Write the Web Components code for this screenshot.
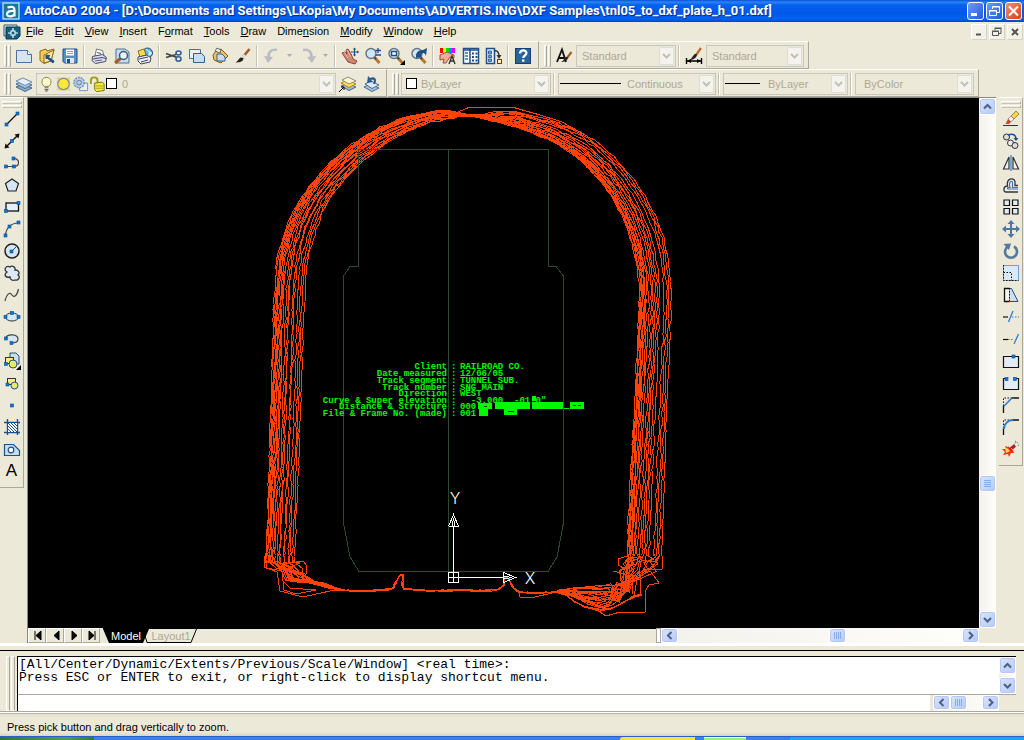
<!DOCTYPE html>
<html lang="en">
<head>
<meta charset="utf-8">
<title>AutoCAD 2004</title>
<style>
html, body { margin: 0; height: 100%; }
body { font: 11px/14px "Liberation Sans", Arial, sans-serif; background: #ece9d8; color: #000; overflow: hidden; }
</style>
</head>
<body>
<cad-app></cad-app>
<script>
const define = (name, css, html, setup) => {
  const template = document.createElement('template');
  template.innerHTML = `<style>*,::before,::after{box-sizing:border-box}button{font:inherit;border:0;margin:0;padding:0;background:none;color:inherit}${css}</style>`;
  customElements.define(name, class extends HTMLElement {
    connectedCallback() {
      if (this.shadowRoot) return;
      const root = this.attachShadow({ mode: 'open' });
      root.append(template.content.cloneNode(true));
      const body = document.createElement('template');
      body.innerHTML = typeof html === 'function' ? html(this) : html;
      root.append(body.content);
      if (setup) setup(this, root);
    }
  });
};

/* ---------- icons, all on an 18 x 18 grid ---------- */
const B = '#1f4f88', P = '#c9dcf0';
const node = (x, y) => `<rect x="${x - 1.5}" y="${y - 1.5}" width="3" height="3" fill="#0a78d8" stroke="#06509c" stroke-width=".6"/>`;
const lens = `<path d="M10.500 10.500l5 5.500" stroke="#b5772a" stroke-width="3"/><path d="M10 10l2 2" stroke="#444" stroke-width="2"/><circle cx="7" cy="6.500" r="5" fill="#cfe6f6" stroke="#66737e" stroke-width="1.400"/>`;
const icons = {
  new: `<path d="M1.500 3.500h11l4 4v8h-15z" fill="#d5e4f4" stroke="#4a7197"/><path d="M12.500 3.500v4h4" fill="#fff" stroke="#4a7197"/>`,
  open: `<path d="M2 4l6-2 1 2 7-2-3 12-7 2.500-4-3z" fill="#f2cb5a" stroke="#8c6a1a"/><path d="M6 8l10-5-3 11-7 2z" fill="#ffe9a0" stroke="#8c6a1a"/><path d="M15 16l-6-5 1-1 6 4zM8 12V8l4 .5z" fill="${B}" stroke="${B}"/>`,
  save: `<path d="M2 2h14v14H3.500L2 14.500z" fill="#5b8dc9" stroke="${B}"/><path d="M5 2.500h8v6H5z" fill="#fff"/><path d="M6 4.500h6M6 6.500h6" stroke="#7fa9d8"/><path d="M5 11h8v5H5z" fill="#dbe9f6"/><path d="M6 12h3v4H6z" fill="${B}"/>`,
  print: `<path d="M5 9L6.500 2l6 1.500L14 9z" fill="#fff" stroke="#777"/><path d="M2.500 9.500l10-2 4 3-1 4-10 2-3.500-3z" fill="#dedef0" stroke="#444a6a"/><path d="M3 12l9-1.500 4 1M7 5.500l4 1" stroke="#444a6a" fill="none"/><path d="M5 14l7-1" stroke="#667" fill="none"/>`,
  preview: `<path d="M3 2h9l4 3v11H3z" fill="#c9def2" stroke="#4a7197"/><path d="M8 11l-6 5" stroke="#a85c22" stroke-width="3"/><circle cx="10.500" cy="8.500" r="4" fill="#e7f4fd" stroke="#40576e" stroke-width="1.500"/>`,
  publish: `<circle cx="11.500" cy="6" r="5" fill="#58b5e5" stroke="${B}"/><path d="M10 2c2 2 5 3 2 7l4-3" fill="#fff" stroke="#e6f4f9"/><path d="M2 4l6-2 2 6-6 2z" fill="#ffd947" stroke="#87701b"/><path d="M2 10l9-2 4 3-1 4-9 2-3-3z" fill="#edf0f4" stroke="#3c4560"/><path d="M3 12l9-2M5 15l7-2" stroke="#3c4560"/>`,
  cut: `<path d="M1 6.500l11 4M1 10.500l10-3" stroke="#444" stroke-width="1.600"/><ellipse cx="13.500" cy="6" rx="2.500" ry="2" fill="none" stroke="#345a93" stroke-width="1.600"/><ellipse cx="13.500" cy="12" rx="2.500" ry="2.200" fill="none" stroke="#345a93" stroke-width="1.600"/>`,
  copy: `<path d="M1.500 2.500h11v9h-11z" fill="#e8f0fa" stroke="#4a7197"/><path d="M5.500 6.500h8l3 3v6h-11z" fill="${P}" stroke="#33618e"/>`,
  paste: `<path d="M5 4l5-2 7 7-7 7-7-3-1-5z" fill="#efc45a" stroke="#7c5b18"/><path d="M4 4l2-3 4 2-1 3z" fill="#eee" stroke="#666"/><path d="M6 7h5l3 3v4H6z" fill="${P}" stroke="#33618e"/>`,
  match: `<path d="M15.500 2L9 10" stroke="#a65c28" stroke-width="2.600"/><path d="M11 8l-2.500 3" stroke="#ddd" stroke-width="3"/><path d="M9.500 11c0 4-5 4.500-8 4.500 2-1 3-3.500 5-5z" fill="#222"/>`,
  undo: `<path d="M14 3C8 2 5 5 5.500 11" fill="none" stroke="#b9bcc4" stroke-width="2.600"/><path d="M1 9l9 1-5 6z" fill="#b9bcc4"/>`,
  redo: `<path d="M4 3c6-1 9 2 8.500 8" fill="none" stroke="#b9bcc4" stroke-width="2.600"/><path d="M17 9l-9 1 5 6z" fill="#b9bcc4"/>`,
  pan: `<path d="M1 6l3-1 2 2-1-4 2-1 3 5 2 5 4 2-2 3-7-2z" fill="#d08674" stroke="#8d4335"/><path d="M3 5l4 6M6 3l4 7" stroke="#f0b9a5"/><path d="M13.500 1v8M9.500 5h8" stroke="${B}" stroke-width="1.200"/><path d="M12 2.500l1.500-2 1.500 2M12 7.500l1.500 2 1.500-2M16 3.500L18 5l-2 1.500" fill="${B}"/>`,
  zoom: lens + `<path d="M14 1v5M11.500 3.500h5.500M11.500 8h5.500" stroke="${B}" stroke-width="1.300"/>`,
  zoomwin: lens + `<rect x="4.500" y="4.500" width="5" height="4" fill="#fff" stroke="${B}" stroke-width="1.500"/><path d="M18 13v5h-5z"/>`,
  zoomprev: lens + `<path d="M6 9c0-4 3-6 7-6l4-2-1 8c-1-4-5-4-5 0l1 1-6 1z" fill="${B}"/>`,
  props: `<path d="M1 1h3v5H1z" fill="#f00"/><path d="M4 1h3v5H4z" fill="#ff0"/><path d="M7 1h3v5H7z" fill="#0d0"/><path d="M10 1h3v5h-3z" fill="#08f"/><path d="M13 1h3v5h-3z" fill="#d0f"/><path d="M1 8l7-3 7 3v3l-4-1-4 6H4l1-4-4 1z" fill="#efad91" stroke="#925344"/><path d="M10 17l3-8 3 8M11 14h4" fill="none" stroke="#333" stroke-width="1.400"/>`,
  dc: `<path d="M1.500 1.500h15v15h-15z" fill="#fff" stroke="${B}" stroke-width="1.500"/><path d="M1 3h16M8 2v15" stroke="${B}" stroke-width="1.500"/><path d="M3 6h3M3 9h3M3 12h3" stroke="#3a70ad" stroke-width="1.500"/><path d="M10 5.500h2v2h-2zM13.500 5.500h2v2h-2zM10 9h2v2h-2zM13.500 9h2v2h-2zM10 12.500h2v2h-2zM13.500 12.500h2v2h-2z" fill="${B}"/>`,
  tp: `<path d="M1.500 1.500h8v15h-8z" fill="#e9f2fb" stroke="${B}" stroke-width="1.500"/><path d="M3.500 4h3v3h-3zM3.500 8.500h3v2h-3zM3.500 12h3v2.500h-3z" fill="#7da3cf" stroke="${B}" stroke-width=".8"/><path d="M9 4c4-1 5 2 5 6" fill="none" stroke="#333" stroke-width="1.500"/><path d="M11.500 8h5L14 12z" fill="#333"/><rect x="12.500" y="12.500" width="4" height="4" fill="#fff4b0" stroke="${B}"/>`,
  help: `<rect x="1.500" y="1.500" width="15" height="15" fill="#28639b" stroke="#173e70"/><path d="M6 6.500c0-4 6.500-4 6.500-.5 0 2.500-3.300 2.500-3.300 5" fill="none" stroke="#fff" stroke-width="2.200"/><rect x="8" y="12.500" width="2.400" height="2.200" fill="#fff"/>`,
  style: `<path d="M2 15L7 2.500l4 12.500M3.500 11h6" fill="none" stroke="#111" stroke-width="1.800"/><path d="M16.500 5L12 11" stroke="#a65c28" stroke-width="2.200"/><path d="M13 10c0 4-4 5-7 5 3-1 3-4 5-5z" fill="#222"/>`,
  dim: `<path d="M1.500 11v6M16.500 11v6M2 14h14" stroke="#000" stroke-width="1.400"/><path d="M2 14l4-2v4zM16 14l-4-2v4z"/><path d="M16 1l-5 7" stroke="#b76930" stroke-width="2.200"/><path d="M12 7c0 4-4 6-8 6 3-1 4-5 6-6z" fill="#222"/>`,
  layers: `<path d="M1 12l7-3 9 4-7 3.500z" fill="#8ba9ca" stroke="#466a90"/><path d="M1 9l7-3 9 4-7 3.500z" fill="#a9c3df" stroke="#466a90"/><path d="M1 6l7-3 9 4-7 3.500z" fill="#e5eef8" stroke="#6a8cad"/>`,
  layermake: `<path d="M2 11l7-3 8 4-7 3.500z" fill="#9db9d8" stroke="#466a90"/><path d="M2 8l7-3 8 4-7 3.500z" fill="#ffe04c" stroke="#a78a10"/><path d="M3 5l6-3 8 4-7 3z" fill="#fff7c9" stroke="#888"/><path d="M0 17l5-5M5 12v3M5 12H2" stroke="#000" fill="none"/>`,
  layerprev: `<path d="M2 12l6-3 9 4-7 3.500z" fill="#a9c3df" stroke="#466a90"/><path d="M3 9l6-3 8 4-7 3.500z" fill="#dce9f7" stroke="#466a90"/><path d="M13 9c3-5-1-8-5-6L6 1 5 8l6-1-2-2c3-1 4 1 2 4z" fill="#2f5b8f"/>`,
  line: `<path d="M3.500 14.500l11-11" stroke="#111" stroke-width="1.200"/>${node(14.500, 3.500)}${node(3.500, 14.500)}`,
  xline: `<path d="M3 15L15 3" stroke="#111" stroke-width="1.400"/><path d="M1.500 16.500l1-5 4 4zM16.500 1.500l-5 1 4 4z" fill="#111"/>${node(9, 9)}`,
  pline: `<path d="M3 12.500h8c6 0 6-8 0-8" fill="none" stroke="#444" stroke-width="1.200"/>${node(3, 12.500)}${node(11, 12.500)}${node(10.500, 4.500)}`,
  polygon: `<path d="M9 3l6.500 4.500-2.500 7.500H5L2.500 7.500z" fill="#d7e6f4" stroke="#222" stroke-width="1.200"/>`,
  rect: `<rect x="3" y="5" width="12.500" height="8" fill="#e6eff8" stroke="#111" stroke-width="1.300"/>${node(3, 13)}${node(15.500, 5)}`,
  arc: `<path d="M2.500 15.500C3 8 8 3 15.500 3" fill="none" stroke="#444" stroke-width="1.200"/>${node(2.500, 15.500)}${node(6.500, 6.500)}${node(15.500, 2.500)}`,
  circle: `<circle cx="9" cy="9" r="7" fill="#d7e6f4" stroke="#222" stroke-width="1.500"/><path d="M9 9l4-4" stroke="${B}"/>${node(8.500, 9.500)}`,
  cloud: `<path d="M4 8C0 6 3 1 7 3c2-2 6 0 5 3 4 0 5 3 3 5 3 2 0 6-3 5-2 1-5 0-5-3-4 1-7-2-3-5z" fill="#dde9f5" stroke="#333" stroke-width="1.300"/>`,
  spline: `<path d="M2 15c2-8 5-9 7-6s5 1 6.500-6" fill="none" stroke="#444" stroke-width="1.200"/>`,
  ellipse: `<ellipse cx="9" cy="9" rx="6.500" ry="4" fill="#d7e6f4" stroke="#333"/>${node(2.500, 9)}${node(15.500, 9)}${node(9, 5)}`,
  earc: `<path d="M2.500 8.500C4 3 15 4 15 9c0 3-3 4-6.500 4" fill="#d7e6f4" stroke="#444" stroke-width="1.200"/>${node(3, 8.500)}${node(8.500, 13)}`,
  insert: `<path d="M7 1h6l3 3v8H7z" fill="${P}" stroke="${B}"/><rect x="2.500" y="5.500" width="8" height="6" fill="#f8ef76" stroke="#333"/><circle cx="10" cy="12" r="4" fill="#efe969" stroke="${B}"/>${node(3, 12)}<path d="M18 13v5h-5z"/>`,
  block: `<rect x="4.500" y="4.500" width="8" height="6" fill="#f8ef76" stroke="#333"/><circle cx="11.500" cy="11.500" r="3.500" fill="#efe969" stroke="${B}"/>${node(4.500, 10.500)}`,
  point: node(9, 9.500),
  hatch: `<path d="M1 4.500h16M1 14.500h16M4.500 1v16M14.500 1v16" stroke="${B}" stroke-width="1.400"/><path d="M5 5h9v9H5z" fill="#fff"/><path d="M5 5l9 9M8 5l6 6M11 5l3 3M5 8l6 6M5 11l3 3" stroke="${B}"/>`,
  region: `<path d="M1.500 4.500h9l6 6v5h-15z" fill="${P}" stroke="${B}" stroke-width="1.200"/><circle cx="8" cy="10" r="2.800" fill="#fff" stroke="${B}" stroke-width="1.200"/>`,
  erase: `<path d="M1 15.500h15" stroke="#333"/><path d="M14 1l3 3-5 5-3-3z" fill="#f2d54c" stroke="#7d6a17" stroke-width=".7"/><path d="M9 6l3 3-3 3-3-3z" fill="#eee" stroke="#777" stroke-width=".7"/><path d="M6 9l3 3-2 2H3.500z" fill="#d3452e"/>`,
  dup: `<circle cx="4.500" cy="5" r="3" fill="#ddd" stroke="#333"/><circle cx="8.500" cy="11" r="3" fill="#eee" stroke="#333"/><circle cx="13" cy="13.500" r="3" fill="#ddd" stroke="#333"/><path d="M6 3c5-2 8 0 8 4" fill="none" stroke="${B}" stroke-width="1.600"/><path d="M11.500 6h5L14 9z" fill="${B}"/>`,
  mirror: `<path d="M7 3v12H1.500zM11 3v12h5.500z" fill="#eef3f8" stroke="#333" stroke-width="1.200"/><path d="M9 1v16" stroke="#2a7fd4" stroke-width="1.200"/>`,
  offset: `<path d="M16 16H4c-3 0-3-6 1.500-6C4 1 14 1 13 7M13 7v2.500h3" fill="#eee" stroke="#333" stroke-width="1.300"/><path d="M16 13H6.500c-1.500 0-1.500-1.500 0-1.500H8C6 4.500 11 4 10.500 7v4.500H16" fill="none" stroke="#3274b8" stroke-width="1.200"/>`,
  array: `<path d="M2 2h5.500v5.500H2zM10.500 2H16v5.500h-5.500zM2 10.500h5.500V16H2zM10.500 10.500H16V16h-5.500z" fill="#e3ebf5" stroke="#111" stroke-width="1.200"/>`,
  move: `<path d="M9 3v12M3 9h12" stroke="#4b76a5" stroke-width="2"/><path d="M9 0l3.500 4h-7zM9 18l3.500-4h-7zM0 9l4-3.500v7zM18 9l-4-3.500v7z" fill="#4b76a5"/>`,
  rotate: `<path d="M6 4.500A6 6 0 1 0 12 4.500" fill="none" stroke="#55789d" stroke-width="2.600"/><path d="M1.500 2L9 1.500 7 8z" fill="#55789d"/>`,
  scale: `<rect x="1.500" y="1.500" width="15" height="15" fill="#dce8f4" stroke="#7ba0c6"/><path d="M1.500 1v15.500h15M1.500 8.500h8v8" fill="none" stroke="#111" stroke-dasharray="1.500 1.500"/>`,
  stretch: `<path d="M7.500 2.500h2l6.500 13H7.500z" fill="#cbdff3" stroke="${B}"/><path d="M7.500 2.500h-5v13h5" fill="#f4f3ec" stroke="#111" stroke-width="1.300"/><path d="M7.500 2v13" stroke="#111" stroke-dasharray="1.500 1.500"/>`,
  trim: `<path d="M1 9h5" stroke="#111" stroke-width="1.200"/><path d="M6.500 14L11 3" stroke="#2a7fd4" stroke-width="1.300"/><path d="M10 9h7" stroke="#2a7fd4" stroke-dasharray="1.500 1.500"/>`,
  extend: `<path d="M1 9.500h5" stroke="#111" stroke-width="1.200"/><path d="M6 9.500h6" stroke="#2a7fd4" stroke-dasharray="1.500 1.500"/><path d="M12 14l4.500-10" stroke="#2a7fd4" stroke-width="1.300"/>`,
  breakpt: `<path d="M1.500 4.500h15v11h-15z" fill="#e3ebf5" stroke="#111" stroke-width="1.200"/>${node(11.500, 4.500)}`,
  breakln: `<path d="M4 4.500H1.500v11h15v-11H14" fill="#e3ebf5" stroke="#111" stroke-width="1.200"/>${node(4.500, 5)}${node(13, 5)}`,
  chamfer: `<path d="M1.500 10V2h8" fill="none" stroke="#111" stroke-dasharray="1.500 1.500"/><path d="M1.500 9.500V17M9.500 2H17" stroke="#111" stroke-width="1.300"/><path d="M2 10l8-8" stroke="#2a7fd4" stroke-width="1.600"/>`,
  fillet: `<path d="M1.500 10V2h8" fill="none" stroke="#111" stroke-dasharray="1.500 1.500"/><path d="M1.500 10V17M10.500 2H17" stroke="#111" stroke-width="1.300"/><path d="M2 11c0-5 4-9 9-9" fill="none" stroke="#2a7fd4" stroke-width="2"/>`,
  explode: `<path d="M6 6l2 2 4-1-1 3 1 3-3 0-2 4-1-3-5 1 2-3-3-3 4 0-1-3 3 1z" fill="#e33a1e"/><path d="M3 7l3 2 2 2-4 2z" fill="#ffdb42"/><path d="M8 9.500l5-4" stroke="#a22" stroke-width="3.400"/><path d="M9 8l2 2" stroke="#eb6"/><path d="M12 5l2-3M13 1l3 2M16 6l1-2" stroke="#779" stroke-dasharray="1.500 1"/>`,
  bulb: `<path d="M6.500 11.500C2.500 8 4 2 9 2s6.500 6 2.500 9.500z" fill="#fffccf" stroke="#8a8238"/><path d="M7 13h4M7 15h4M8 16.500h2" stroke="#666" stroke-width="1.200"/>`,
  sun: `<rect x="2" y="2" width="14" height="14" fill="#d9d26a" opacity=".7"/><circle cx="9" cy="9" r="6" fill="#ffe92e" stroke="#7c8a9c" stroke-width="1.200"/>`,
  freeze: `<path d="M8 8h8.500v8H8z" fill="#e8eef6" stroke="#7894b4"/><circle cx="7.500" cy="7.500" r="5.500" fill="#b9cee3" stroke="#7290b3" stroke-width="1.500" stroke-dasharray="2 1"/><circle cx="7.500" cy="7.500" r="2.500" fill="none" stroke="#567dab"/>`,
  lock: `<path d="M2 9V5c0-4 7-4 7 0v3" fill="none" stroke="#9b9b24" stroke-width="2"/><path d="M6 8l8-1 2 2v7l-8 1-2-2z" fill="#f2ea3d" stroke="#77740e"/><path d="M7 11h8M7 13.500h8" stroke="#a9a51f"/>`,
  drawing: `<path d="M1 2h13v11H1z" fill="#dce9f0" stroke="#36556c"/><path d="M3 4h14v9l-3 3H3z" fill="#10617f" stroke="#0b3a55"/><path d="M10 5v10M5 10h10" stroke="#fff" stroke-width="1.200"/><rect x="8" y="8" width="4" height="4" fill="#10617f" stroke="#fff"/>`,
  app: `<rect x="1" y="1" width="16" height="16" fill="#14799c" stroke="#d5eef2" stroke-width="1.200"/><path d="M5.500 5.500c5-1.500 7-.5 7 2.500v6.500M12.500 9C8 8.500 5 9.500 5 12c0 3.500 6 3 7.500 0" fill="none" stroke="#fff" stroke-width="2.200"/>`
};
define('cad-icon', `:host{display:block;width:18px;height:18px;flex:none}svg{display:block;width:100%;height:100%}`,
  el => `<svg viewBox="0 0 18 18" fill="none" aria-hidden="true"><g fill="#000">${icons[el.getAttribute('name')]}</g></svg>`);

/* ---------- title bar ---------- */
define('title-bar', `
:host{display:flex;align-items:center;height:22px;flex:none;padding:0 2px;gap:4px;color:#fff;
 background:linear-gradient(#0a50d0,#2a84fa 2px,#0560ee 5px,#0058e8 14px,#0461f4 19px,#0a44c0)}
h1{flex:1;min-width:0;margin:0;font:bold 13px/18px Roboto,"Liberation Sans",sans-serif;white-space:nowrap;text-shadow:1px 1px #0a2a80}
div{display:flex;gap:2px}
button{width:17px;height:18px;border:1px solid #fff;border-radius:3px;background:linear-gradient(135deg,#6d9cf8,#2258dd)}
button:last-child{background:linear-gradient(135deg,#f0906e,#d8401a)}
svg{display:block}`,
`<cad-icon name="app"></cad-icon><h1><slot></slot></h1>
<div><button aria-label="Minimize"><svg width="15" height="16"><path d="M3 11.500h6" stroke="#fff" stroke-width="3"/></svg></button>
<button aria-label="Restore"><svg width="15" height="16" fill="none" stroke="#fff"><path d="M5.500 6V3.500h7v6H10M5 4h8M2.500 7.500h7v5h-7zM2 8h8"/></svg></button>
<button aria-label="Close"><svg width="15" height="16"><path d="M3 3.500l9 9M12 3.500l-9 9" stroke="#fff" stroke-width="2"/></svg></button></div>`);

/* ---------- menu bar ---------- */
define('menu-bar', `
:host{display:flex;align-items:center;height:19px;flex:none;padding:0 1px 0 3px;background:#ece9d8}
nav{display:flex;flex:1;margin-left:1px}
nav button{padding:0 6px 0 5px;font-size:11px;line-height:17px;white-space:nowrap}
nav button:first-child{padding-left:4px}
.w{display:flex;gap:2px}.w button{width:16px;height:16px;background:#f4f2e8;border:1px solid #fff;border-right-color:#d6d2c2;border-bottom-color:#d6d2c2}
svg{display:block}`,
`<cad-icon name="drawing"></cad-icon><nav>${['|File', '|Edit', '|View', '|Insert', 'F|ormat', '|Tools', '|Draw', 'Dime|nsion', '|Modify', '|Window', '|Help'].map(s => `<button>${s.replace(/\|(.)/, '<u>$1</u>')}</button>`).join('')}</nav>
<div class="w"><button aria-label="Minimize drawing"><svg width="14" height="14"><path d="M4 9.500h5" stroke="#555" stroke-width="2"/></svg></button>
<button aria-label="Restore drawing"><svg width="14" height="14" fill="none" stroke="#555"><path d="M5 5V3.500h6v5H9M4.500 3h7M2.500 6.500h6v4h-6zM2 6h7"/></svg></button>
<button aria-label="Close drawing"><svg width="14" height="14"><path d="M4 4l6 6M10 4l-6 6" stroke="#555" stroke-width="2"/></svg></button></div>`);

/* ---------- toolbars ---------- */
define('tool-bar', `
:host{display:flex;align-items:center;flex:none;box-sizing:border-box;padding:1px 4px 0;border:1px solid #fff;border-right-color:#aca899;border-bottom-color:#aca899;border-left:0}
:host([vertical]){flex-direction:column;padding:3px 0 5px;width:24px}
i{display:flex;flex:none;gap:1px;margin-right:1px}
i::before,i::after{content:"";width:3px;height:22px;border:1px solid #fff;border-right-color:#aca899;border-bottom-color:#c8c4b4}
:host([vertical]) i{flex-direction:column;margin:0}
:host([vertical]) i::before,:host([vertical]) i::after{width:20px;height:3px}`,
`<i></i><slot></slot>`);
define('tool-button', `
:host{display:block;flex:none}
button{display:grid;place-items:center;width:23px;height:22px}
:host([drop]) button{width:13px}
b{font:17px/20px "Liberation Sans",Arial,sans-serif}
svg{display:block}`,
el => `<button aria-label="${el.getAttribute('label')}">${el.hasAttribute('drop') ? '<svg width="5" height="3"><path d="M0 0h5L2.500 3z" fill="#aab"/></svg>' : el.hasAttribute('text') ? `<b>${el.getAttribute('text')}</b>` : `<cad-icon name="${el.getAttribute('name')}"></cad-icon>`}</button>`);
define('tool-sep', `:host{display:block;flex:none;width:2px;height:22px;margin:0 2px;box-sizing:border-box;border-left:1px solid #c5c2b2;border-right:1px solid #fff}`, '');

define('combo-box', `
:host{position:relative;display:block;flex:none;height:22px;margin-left:1px}
select{appearance:none;display:block;width:100%;height:22px;margin:0;padding:0 18px 0 var(--indent,5px);border:1px solid #c9c7ba;border-radius:0;background:#ece9d8;color:#aca899;font:11px/20px "Liberation Sans",Arial,sans-serif;opacity:1}
span{position:absolute;inset:1px auto 1px 2px;display:flex;align-items:center;pointer-events:none}
svg{position:absolute;right:2px;top:2px;background:#f4f3ed;border:1px solid #e0ded2;pointer-events:none}
::slotted(cad-icon){width:17px}`,
el => `<select disabled aria-label="${el.getAttribute('label')}"><option>${el.getAttribute('value')}</option></select><span><slot></slot></span><svg width="15" height="18"><path d="M3 6l3.500 3.500L10 6" stroke="#c2c0b4" stroke-width="2" fill="none"/></svg>`);
define('color-chip', `:host{display:block;box-sizing:border-box;width:11px;height:11px;border:1px solid #000;background:#fff}`, '');
define('line-sample', `:host{display:block;height:1px;background:#000}`, '');

/* ---------- scroll bars ---------- */
define('scroll-bar', `
:host{display:flex;flex-direction:column;background:linear-gradient(90deg,#f3f1ec,#fefefb)}
:host([horizontal]){flex-direction:row}
button,.t{flex:none;width:17px;height:17px;border:1px solid #fff;border-radius:3px;background:linear-gradient(135deg,#dae5ff,#b4c9f8);box-shadow:inset 0 0 0 1px #b5c8f4;display:grid;place-items:center}
:host([horizontal]) button,:host([horizontal]) .t{height:15px}
svg{display:block}
.a{flex:var(--before,1)}.b{flex:var(--after,1)}
:host([bare]) .t{display:none}
:host([horizontal]) svg{transform:rotate(-90deg)}`,
`<button aria-label="Scroll back"><svg width="9" height="9"><path d="M1 6.500L4.500 3 8 6.500" fill="none" stroke="#4d6185" stroke-width="2"/></svg></button>
<div class="a"></div><div class="t"><svg width="9" height="9"><path d="M1 1.500h7M1 3.500h7M1 5.500h7M1 7.500h7" stroke="#8ba9ee"/></svg></div><div class="b"></div>
<button aria-label="Scroll forward"><svg width="9" height="9"><path d="M1 3l3.500 3.500L8 3" fill="none" stroke="#4d6185" stroke-width="2"/></svg></button>`);

/* ---------- tunnel drawing ---------- */
const drawing = () => {
  let seed = 71;
  const rnd = () => (seed = (seed * 16807) % 2147483647) / 2147483647;
  const mix = (a, b, t) => a + (b - a) * t;
  /* each wall is a pair of limits; the survey profiles lie between them */
  const leftA = [[266, 556], [268, 500], [271, 400], [274, 300], [277, 262], [284, 233], [296, 207], [312, 183], [332, 161], [357, 141], [386, 125], [417, 115], [446, 111]];
  const leftB = [[294, 556], [297, 500], [301, 400], [304, 310], [307, 268], [313, 240], [322, 214], [334, 193], [350, 174], [372, 154], [398, 136], [423, 125], [448, 119]];
  const rightA = [[502, 123], [527, 131], [552, 142], [577, 158], [600, 181], [616, 205], [628, 231], [636, 262], [639, 295], [635, 400], [630, 480], [627, 556]];
  const rightB = [[506, 112], [537, 117], [569, 127], [599, 144], [627, 171], [648, 201], [662, 233], [669, 267], [671, 305], [667, 400], [664, 490], [661, 556]];
  const spline = (pts) => {
    const out = [];
    for (let i = 0; i < pts.length - 1; i++) {
      const p0 = pts[Math.max(0, i - 1)], p1 = pts[i], p2 = pts[i + 1], p3 = pts[Math.min(pts.length - 1, i + 2)];
      const n = Math.max(3, Math.round(Math.hypot(p2[0] - p1[0], p2[1] - p1[1]) / 6));
      for (let k = 0; k < n; k++) {
        const t = k / n;
        out.push([0, 1].map(d => .5 * (2 * p1[d] + (p2[d] - p0[d]) * t + (2 * p0[d] - 5 * p1[d] + 4 * p2[d] - p3[d]) * t * t + (3 * p1[d] - p0[d] - 3 * p2[d] + p3[d]) * t * t * t)));
      }
    }
    out.push(pts[pts.length - 1]);
    return out;
  };
  const rough = (pts, r) => 'M' + pts.map(p => `${(p[0] + (rnd() - .5) * r).toFixed(1)} ${(p[1] + (rnd() - .5) * r).toFixed(1)}`).join('L');
  const between = (A, B, t) => A.map((p, i) => [mix(p[0], B[i][0], t), mix(p[1], B[i][1], t)]);
  const lt = [0, .04, .08, .11, .14, .18, .22, .26, .31, .4, .47, .5, .62, .67, .78, .86, .93, 1];
  const rt = [0, .03, .06, .09, .12, .15, .19, .24, .3, .38, .44, .5, .56, .64, .78, .86, .93, 1];
  let d = '';
  lt.forEach((t, i) => {
    const tr = rt[i];
    d += rough(spline(between(leftA, leftB, t).concat(between(rightA, rightB, tr))), 1.8);
    const x = mix(266, 294, t), j = rnd();
    d += rough([[x, 556], [x - 1 + j * 2, 562], [x + 8, 562 + j * 7], [mix(280, 306, j), 570 + j * 5], [mix(284, 310, j), 576 + 6 * rnd()], [mix(303, 322, j), 579 + j * 7], [325, 584 + j * 3], [341, 590]], 2);
    const y = 586 + i * 1.3;
    d += rough([[558, 592], [572, mix(589, 595, i / 17)], [586, mix(586, 604, i / 17)], [600, y], [610, y + 1 - 4 * rnd()], [618, mix(583, 603, rnd())], [622 + 8 * rnd(), 592 - 10 * j], [mix(620, 634, tr) + 4 * j, 577 + 6 * rnd()], [mix(620, 650, tr) + 5 * j, 570], [mix(632, 662, tr) - 12 * j, 563], [mix(622, 657, tr) + 8 * rnd(), 559], [mix(627, 661, tr), 556]], 4);
  });
  for (let i = 0; i < 4; i++) {
    d += rough(spline([[338, 590], [366, 591], [390, 589], [394, 586], [399, 577], [403, 575], [403, 588], [410, 589], [430, 591], [462, 590], [480, 591], [501, 588], [505, 578], [509, 579], [517, 591], [540, 593], [563, 592], [585, 600]]), 2);
  }
  for (let i = 0; i < 4; i++) d += rough([[563, 593], [574, 601], [586, 607], [600, 610], [612, 609], [624, 602], [633, 597], [641, 595]], 2.500);
  /* stray profiles */
  d += 'M458 112L470 107L512 107L540 115L562 122L585 135M265 556L264 567L277 572L280 591L303 597L330 591L340 590M266 560L267 568L282 571L284 590L296 594L316 590L290 588L284 582M296 561L304 562L307 566L306 574M586 606L600 612L606 616L620 612L645 612L646 590L649 585L659 583L651 572L643 570L662 569L662 556M519 592L520 597L535 597L552 593M627 556L618 559L618 565L625 569M613 571L624 574M640 597L641 575M634 598L637 578M628 590L629 572M632 594L633 575';
  const rows = [['Client', 'RAILROAD CO.'], ['Date measured', '12/06/05'], ['Track segment', 'TUNNEL SUB.'], ['Track number', 'SNG MAIN'], ['Direction', 'WEST'], ['Curve &amp; Super elevation', '&#160; -3.000&#160; -01.0"'], ['Distance &amp; Structure', '000.0'], ['File &amp; Frame No. (made)', '001']];
  const column = (x, cells, end) => `<text y="369"${end ? ' text-anchor="end"' : ''}>${cells.map((c, i) => `<tspan x="${x}" dy="${i ? (i === 4 || i === 6 ? 6 : 7) : 0}">${c}</tspan>`).join('')}</text>`;
  return `<svg viewBox="28 98 951 530" role="img" aria-label="Tunnel clearance profiles">
<path d="${d}" fill="none" stroke="#ff4208" shape-rendering="crispEdges"/>
<path d="M358.500 149.500H548.500V266.500H556L563.500 276V523L557 557L548 571.500H359L350 557L343.500 523V276L350 266.500H358.500ZM448.500 150V571" fill="none" stroke="#294a2f" shape-rendering="crispEdges"/>
<g fill="#00f800" font-family="Liberation Mono, monospace" font-size="9" font-weight="bold">${column(447, rows.map(r => r[0]), true)}${column(451, rows.map(() => ':'))}${column(460, rows.map(r => r[1]))}
<path d="M478 403h14v6h-14zM495 402h35v7h-35zM532 402h31v7h-31zM564 408h5v1h-5zM570 402h14v7h-14zM479 409h9v7h-9zM504 409h13v6h-13zM532 396h4v5h-4z"/></g>
<path d="M508 411.500h6M573 405.500h3M578 405.500h3M484 406.500h3" stroke="#031"/>
<g fill="none" stroke="#fff" shape-rendering="crispEdges"><path d="M448.500 572.500h10v10h-10zM448.500 577.500h55M453.500 582.500V526M448.500 526.500h10M503.500 572.500v10"/><path d="M448.500 526.500L453.500 514.500L458.500 526.500M503.500 572.500L515.500 577.500L503.500 582.500M452 526l1.500-8 1.500 8M504 576l8 1.500-8 1.500"/></g>
<g fill="#fff" font-family="Inter, Liberation Sans, sans-serif" font-weight="300" font-size="16" text-anchor="middle"><text x="455" y="504">Y</text><text x="530" y="584">X</text></g>
</svg>`;
};
define('tunnel-view', `:host{display:block;min-height:0;min-width:0;background:#000;overflow:hidden}svg{display:block;width:100%;height:100%}`, drawing);

/* ---------- layout tabs ---------- */
define('layout-tabs', `
:host{display:flex;height:15px;background:#ece9d8;min-width:0}
.n{display:flex;flex:none}.n button{width:18px;height:15px;display:grid;place-items:center;border:1px solid #fff;border-right-color:#aca899;border-bottom-color:#aca899}
svg{display:block}
.tabs{position:relative;z-index:0;display:flex;flex:1;margin-left:3px;border-top:1px solid #000}
.tabs button{position:relative;z-index:1;height:14px;line-height:13px;width:46px;color:#fff}
.tabs button+button{z-index:0;width:52px;margin-left:-4px;color:#aca899}
.tabs button svg{position:absolute;inset:0;z-index:-1}
.s{flex:none;width:5px;border:1px solid #aca899;background:#fff}
scroll-bar{width:318px;height:15px;--before:151;--after:116}`,
`<div class="n">${['M6 2v9M12 2v9L7 6.500z', 'M12 2v9L7 6.500z', 'M7 2v9l5-4.500z', 'M12 2v9M6 2v9l5-4.500z'].map((p, i) => `<button aria-label="${['First', 'Previous', 'Next', 'Last'][i]} layout"><svg width="18" height="13"><path d="${p}" stroke="#000"/></svg></button>`).join('')}</div>
<div class="tabs"><button><svg width="46" height="14"><path d="M0 0h46l-6 14H6z"/></svg>Model</button><button><svg width="52" height="14"><path d="M-2 0l4 13.500h44L51.500 0" fill="#ece9d8" stroke="#000"/></svg>Layout1</button></div>
<div class="s"></div><scroll-bar horizontal></scroll-bar>`);

/* ---------- command window ---------- */
define('command-line', `
:host{display:flex;flex:none;height:55px;padding:0 8px 0 6px}
i{display:flex;gap:1px;margin-right:2px}
i::before,i::after{content:"";width:4px;border:1px solid #fff;border-right-color:#aca899}
main{flex:1;min-width:0;border-left:1px solid #000;border-top:1px solid #000}
.log{display:flex;height:38px;background:#fff;border-bottom:1px solid #aca899}
pre{flex:1;min-width:0;margin:0;padding:1px 0 0 1px;font:13px/13px "Liberation Mono","Courier New",monospace;overflow:hidden}
.log scroll-bar{width:17px;--before:1;--after:1}
.in{display:flex;height:16px}
input{flex:1;min-width:0;border:0;padding:0 2px;background:#fff;font:13px/13px "Liberation Mono",monospace;outline:0}
.in scroll-bar{width:66px;margin:0 17px 0 3px;--before:0;--after:1}`,
`<i></i><main><div class="log"><pre><slot></slot></pre><scroll-bar bare></scroll-bar></div>
<div class="in"><input type="text" aria-label="Command"><scroll-bar horizontal></scroll-bar></div></main>`);

define('status-line', `:host{display:flex;align-items:center;flex:none;box-sizing:border-box;height:25px;padding:6px 7px 0;border-top:1px solid #aca899;box-shadow:inset 0 1px #fff,inset 0 2px #b8b5a5;background:linear-gradient(#dedbcb,#ece9d8 6px 20px,#d8d5c5);white-space:nowrap}`, `<slot></slot>`);
define('task-strip', `
:host{display:flex;flex:none;box-sizing:border-box;height:4px;border-top:1px solid #2b5fc8;background:#3c80ee}
b{display:block;height:100%}
.g{flex:0 0 94px;background:linear-gradient(90deg,#2d7a2d,#4fa04a 70%,#2f7d30)}
.s{flex:1}.y{flex:0 0 75px;background:#f8e04a;border-radius:6px 0 0}.w{flex:0 0 42px;margin:0 44px 0 9px;background:#9cf07c;border-top:1px solid #fff}.c{flex:0 0 234px;background:#18a8f4}`,
`<b class="g"></b><b class="s"></b><b class="y"></b><b class="w"></b><b class="c"></b>`);

/* ---------- application frame ---------- */
const bar = list => list.map(n => n === '|' ? '<tool-sep></tool-sep>' : n === 'v' ? '<tool-button drop label="Show history"></tool-button>' : n === 'mtext' ? '<tool-button text="A" label="Multiline text"></tool-button>' : `<tool-button name="${n}" label="${n}"></tool-button>`).join('');
define('cad-app', `
:host{display:flex;flex-direction:column;height:100vh;background:#ece9d8}
.row{display:flex;flex:none;height:28px;gap:1px;overflow:hidden;background:#ece9d8}
.work{display:grid;grid-template-columns:27px minmax(0,1fr) 28px;flex:1;min-height:0}
.work>tool-bar{align-self:start;justify-self:start}
.work>tool-bar:last-child{margin-left:3px}
.doc{display:grid;grid-template:minmax(0,1fr) 15px / minmax(0,1fr) 17px;min-height:0;border:solid #8a887a;border-width:1px 0 0 1px}
.doc>scroll-bar{--before:358;--after:118}
.split{flex:none;height:13px;border-top:3px solid #fff;background:linear-gradient(#ece9d8 4px,#000 4px 5px,#ece9d8 5px)}`,
`<title-bar>AutoCAD 2004 - [D:\\Documents and Settings\\LKopia\\My Documents\\ADVERTIS.ING\\DXF Samples\\tnl05_to_dxf_plate_h_01.dxf]</title-bar>
<menu-bar></menu-bar>
<div class="row"><tool-bar>${bar(['new', 'open', 'save', '|', 'print', 'preview', 'publish', '|', 'cut', 'copy', 'paste', 'match', '|', 'undo', 'v', 'redo', 'v', '|', 'pan', 'zoom', 'zoomwin', 'zoomprev', '|', 'props', 'dc', 'tp', '|', 'help'])}</tool-bar>
<tool-bar>${bar(['style'])}<combo-box label="Text style" value="Standard" style="width:100px"></combo-box><tool-sep></tool-sep>${bar(['dim'])}<combo-box label="Dimension style" value="Standard" style="width:98px"></combo-box></tool-bar></div>
<div class="row"><tool-bar>${bar(['layers'])}<combo-box label="Layer" value="0" style="width:300px;--indent:85px"><cad-icon name="bulb"></cad-icon><cad-icon name="sun"></cad-icon><cad-icon name="freeze"></cad-icon><cad-icon name="lock"></cad-icon><color-chip></color-chip></combo-box>${bar(['layermake', 'layerprev'])}</tool-bar>
<tool-bar><combo-box label="Color" value="ByLayer" style="width:150px;--indent:19px"><color-chip style="margin-left:3px"></color-chip></combo-box><tool-sep></tool-sep>
<combo-box label="Linetype" value="Continuous" style="width:158px;--indent:68px"><line-sample style="width:61px"></line-sample></combo-box><tool-sep></tool-sep>
<combo-box label="Lineweight" value="ByLayer" style="width:125px;--indent:44px"><line-sample style="width:35px"></line-sample></combo-box><tool-sep></tool-sep>
<combo-box label="Plot style" value="ByColor" style="width:119px;--indent:8px"></combo-box></tool-bar></div>
<div class="work"><tool-bar vertical>${bar(['line', 'xline', 'pline', 'polygon', 'rect', 'arc', 'circle', 'cloud', 'spline', 'ellipse', 'earc', 'insert', 'block', 'point', 'hatch', 'region', 'mtext'])}</tool-bar>
<div class="doc"><tunnel-view></tunnel-view><scroll-bar></scroll-bar><layout-tabs></layout-tabs><div></div></div>
<tool-bar vertical>${bar(['erase', 'dup', 'mirror', 'offset', 'array', 'move', 'rotate', 'scale', 'stretch', 'trim', 'extend', 'breakpt', 'breakln', 'chamfer', 'fillet', 'explode'])}</tool-bar></div>
<div class="split"></div>
<command-line>[All/Center/Dynamic/Extents/Previous/Scale/Window] &lt;real time&gt;:
Press ESC or ENTER to exit, or right-click to display shortcut menu.</command-line>
<status-line>Press pick button and drag vertically to zoom.</status-line>
<task-strip></task-strip>`);
</script>
</body>
</html>
